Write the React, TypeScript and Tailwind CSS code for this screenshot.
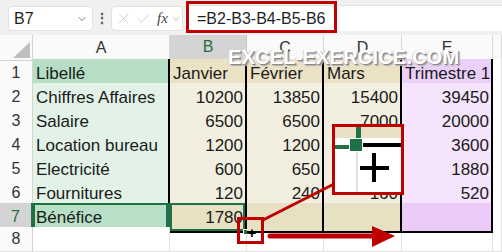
import React from "react";
import { ChevronDown, X, Check } from "lucide-react";

const GRID = "grid grid-cols-[33px_137px_77px_77px_78px_91px_1fr]";

const ROWS: { a: string; v: (string | number)[] }[] = [
  { a: "Libellé", v: ["Janvier", "Février", "Mars", "Trimestre 1"] },
  { a: "Chiffres Affaires", v: [10200, 13850, 15400, 39450] },
  { a: "Salaire", v: [6500, 6500, 7000, 20000] },
  { a: "Location bureau", v: [1200, 1200, 1200, 3600] },
  { a: "Electricité", v: [600, 650, 630, 1880] },
  { a: "Fournitures", v: [120, 240, 160, 520] },
  { a: "Bénéfice", v: [1780, "", "", ""] },
];

// background per kind: header row, body rows, total row
const BG_A = ["bg-[#b5dec5]", "bg-[#e2f2e7]", "bg-[#b7e0c6]"];
const BG_M = ["bg-[#ebe2c5]", "bg-[#f3efe0]", "bg-[#e8e0c3]"];
const BG_E = ["bg-[#eacff8]", "bg-[#f5e4fc]", "bg-[#edcbf9]"];

function kind(i: number) {
  return i === 0 ? 0 : i === 6 ? 2 : 1;
}

function bottom(i: number) {
  return i === 0 || i >= 5
    ? "border-b-2 border-b-black"
    : "border-b border-b-[#8c8c8c] [border-bottom-style:dotted]";
}

function FormulaBar() {
  return (
    <div className="h-[35px] bg-[#f0f0f0] flex items-start pt-[5px] pl-[8px]">
      <div className="mt-px w-[85px] h-[25px] rounded-[4px] bg-white border border-[#e3e3e3] flex items-center pl-[5px] pr-[4px] justify-between">
        <span className="text-[16px] text-[#1f1f1f]">B7</span>
        <ChevronDown size={12} strokeWidth={1.5} className="text-[#555]" />
      </div>
      <div className="w-[18px] h-[26px] flex items-center justify-center text-[#555] text-[14px] font-bold">
        ⋮
      </div>
      <div className="mt-px w-[72px] h-[25px] rounded-[4px] bg-white border border-[#e3e3e3] flex items-center pl-[3px] gap-[3px]">
        <X size={17} strokeWidth={1} className="text-[#bdbdbd]" />
        <Check size={17} strokeWidth={1} className="text-[#bdbdbd]" />
        <span className="ml-[2px] font-['Liberation_Serif',serif] italic text-[15px] text-[#444]">
          fx
        </span>
        <ChevronDown size={10} strokeWidth={1.5} className="text-[#888]" />
      </div>
      <div className="ml-[2px] flex-1 h-[26px] bg-white border-t border-[#e3e3e3] flex items-center pl-[12px] text-[16px] text-[#1f1f1f]">
        =B2-B3-B4-B5-B6
      </div>
    </div>
  );
}

function HeaderRow() {
  const letters = ["A", "B", "C", "D", "E", ""];
  return (
    <div className={`${GRID} h-[24px]`}>
      <div className="relative bg-[#fafafa] border-r border-b border-[#d4d4d4]">
        <svg className="absolute right-[2px] bottom-[2px]" width="17" height="16">
          <polygon points="17,0 17,16 0,16" fill="#bfbfbf" />
        </svg>
      </div>
      {letters.map((l) =>
        l === "B" ? (
          <div
            key={l}
            className="bg-[#d4d4d4] border-r border-r-[#c4c4c4] border-b-2 border-b-[#1e7145] flex items-center justify-center text-[16px] text-[#1e6e3f]"
          >
            {l}
          </div>
        ) : (
          <div
            key={l || "f"}
            className="bg-[#fafafa] border-r border-b border-[#d9d9d9] flex items-center justify-center text-[16px] text-[#333]"
          >
            {l}
          </div>
        ),
      )}
    </div>
  );
}

function DataRow({ i }: { i: number }) {
  const r = ROWS[i];
  const k = kind(i);
  const sel = i === 6;
  const pad = i === 0 ? "justify-start pl-[3px]" : "justify-end pr-[2px]";
  return (
    <div className={`${GRID} h-[24px]`}>
      <div
        className={`flex items-center justify-center text-[16px] border-b border-b-[#e1e1e1] ${
          sel
            ? "bg-[#d4d4d4] text-[#1e6e3f] border-r-2 border-r-[#1e7145]"
            : "bg-[#fafafa] text-[#333] border-r border-r-[#d4d4d4]"
        }`}
      >
        {i + 1}
      </div>
      <div
        className={`flex items-center pl-[3px] pt-[2px] ${BG_A[k]} ${bottom(i)} border-r-2 ${
          sel ? "border-r-[#1e7145] shadow-[inset_0_0_0_2px_#1e7145]" : "border-r-black"
        }`}
      >
        {r.a}
      </div>
      {r.v.map((v, j) => (
        <div
          key={j}
          className={`relative flex items-center pt-[2px] ${pad} ${j === 3 ? BG_E[k] : BG_M[k]} ${bottom(
            i,
          )} border-r-2 border-r-black ${sel && j === 0 ? "shadow-[inset_0_0_0_2px_#1e7145]" : ""}`}
        >
          {v}
          {sel && j === 0 && (
            <span className="absolute -right-[4px] -bottom-[4px] w-[6px] h-[6px] bg-[#1e7145] border border-white" />
          )}
        </div>
      ))}
      <div className="border-b border-r border-[#e1e1e1] bg-white" />
    </div>
  );
}

function EmptyRow() {
  return (
    <div className={`${GRID} h-[24px]`}>
      <div className="bg-[#fafafa] border-r border-b border-[#d4d4d4] border-b-[#e1e1e1] flex items-center justify-center text-[16px] text-[#333]">
        8
      </div>
      {[0, 1, 2, 3, 4, 5].map((j) => (
        <div key={j} className="bg-white border-r border-b border-[#e1e1e1]" />
      ))}
    </div>
  );
}

export default function App() {
  return (
    <div className="relative w-[502px] h-[252px] overflow-hidden bg-white font-['Liberation_Sans',Arial,sans-serif] text-[17px] text-[#1a1a1a]">
      <FormulaBar />
      <HeaderRow />
      {ROWS.map((_, i) => (
        <DataRow key={i} i={i} />
      ))}
      <EmptyRow />

      {/* watermark */}
      <div className="absolute left-[228px] top-[42px] text-[20px] font-bold tracking-[0.2px] text-white [text-shadow:1px_1px_0_#8a8a8a,2px_2px_1px_#b0b0b0,-1px_0_0_#d6d6d6]">
        EXCEL-EXERCICE.COM
      </div>

      {/* red frame round the formula */}
      <div className="absolute left-[186px] top-[1px] w-[151px] h-[32px] border-[3px] border-[#c00000]" />

      {/* small frame round the fill handle */}
      <div className="absolute left-[237px] top-[217px] w-[27px] h-[27px] border-[3px] border-[#c00000] flex items-center justify-center">
        <span className="mt-[3px] ml-[3px] text-[15px] font-bold leading-none text-black">+</span>
      </div>

      {/* zoomed fill handle */}
      <div className="absolute left-[332px] top-[124px] w-[72px] h-[71px] border-[3px] border-[#c00000] bg-white overflow-hidden">
        <div className="h-[11px] bg-[#e9e0c6]" />
        <div className="absolute left-[21px] top-0 w-[5px] h-[12px] bg-[#1e7145]" />
        <div className="absolute left-0 top-[18px] w-[16px] h-[4px] bg-[#1e7145]" />
        <div className="absolute left-[14px] top-[11px] w-[14px] h-[14px] bg-[#1e7145] border border-white" />
        <div className="absolute left-[28px] top-[16px] w-[40px] h-[4px] bg-black" />
        <div className="absolute left-[21px] top-[25px] w-[2px] h-[46px] bg-[#e0e0e0]" />
        <div className="absolute left-[25px] top-[39px] w-[29px] h-[4px] bg-black" />
        <div className="absolute left-[37px] top-[26px] w-[4px] h-[29px] bg-black" />
      </div>

      <svg className="absolute left-0 top-0" width="502" height="252">
        <line x1="263" y1="220" x2="334" y2="184" stroke="#c00000" strokeWidth="3" />
        <line x1="270" y1="236" x2="376" y2="236" stroke="#c00000" strokeWidth="5" strokeLinecap="round" />
        <polygon points="372,226 395,236 372,247" fill="#c00000" />
      </svg>
    </div>
  );
}
